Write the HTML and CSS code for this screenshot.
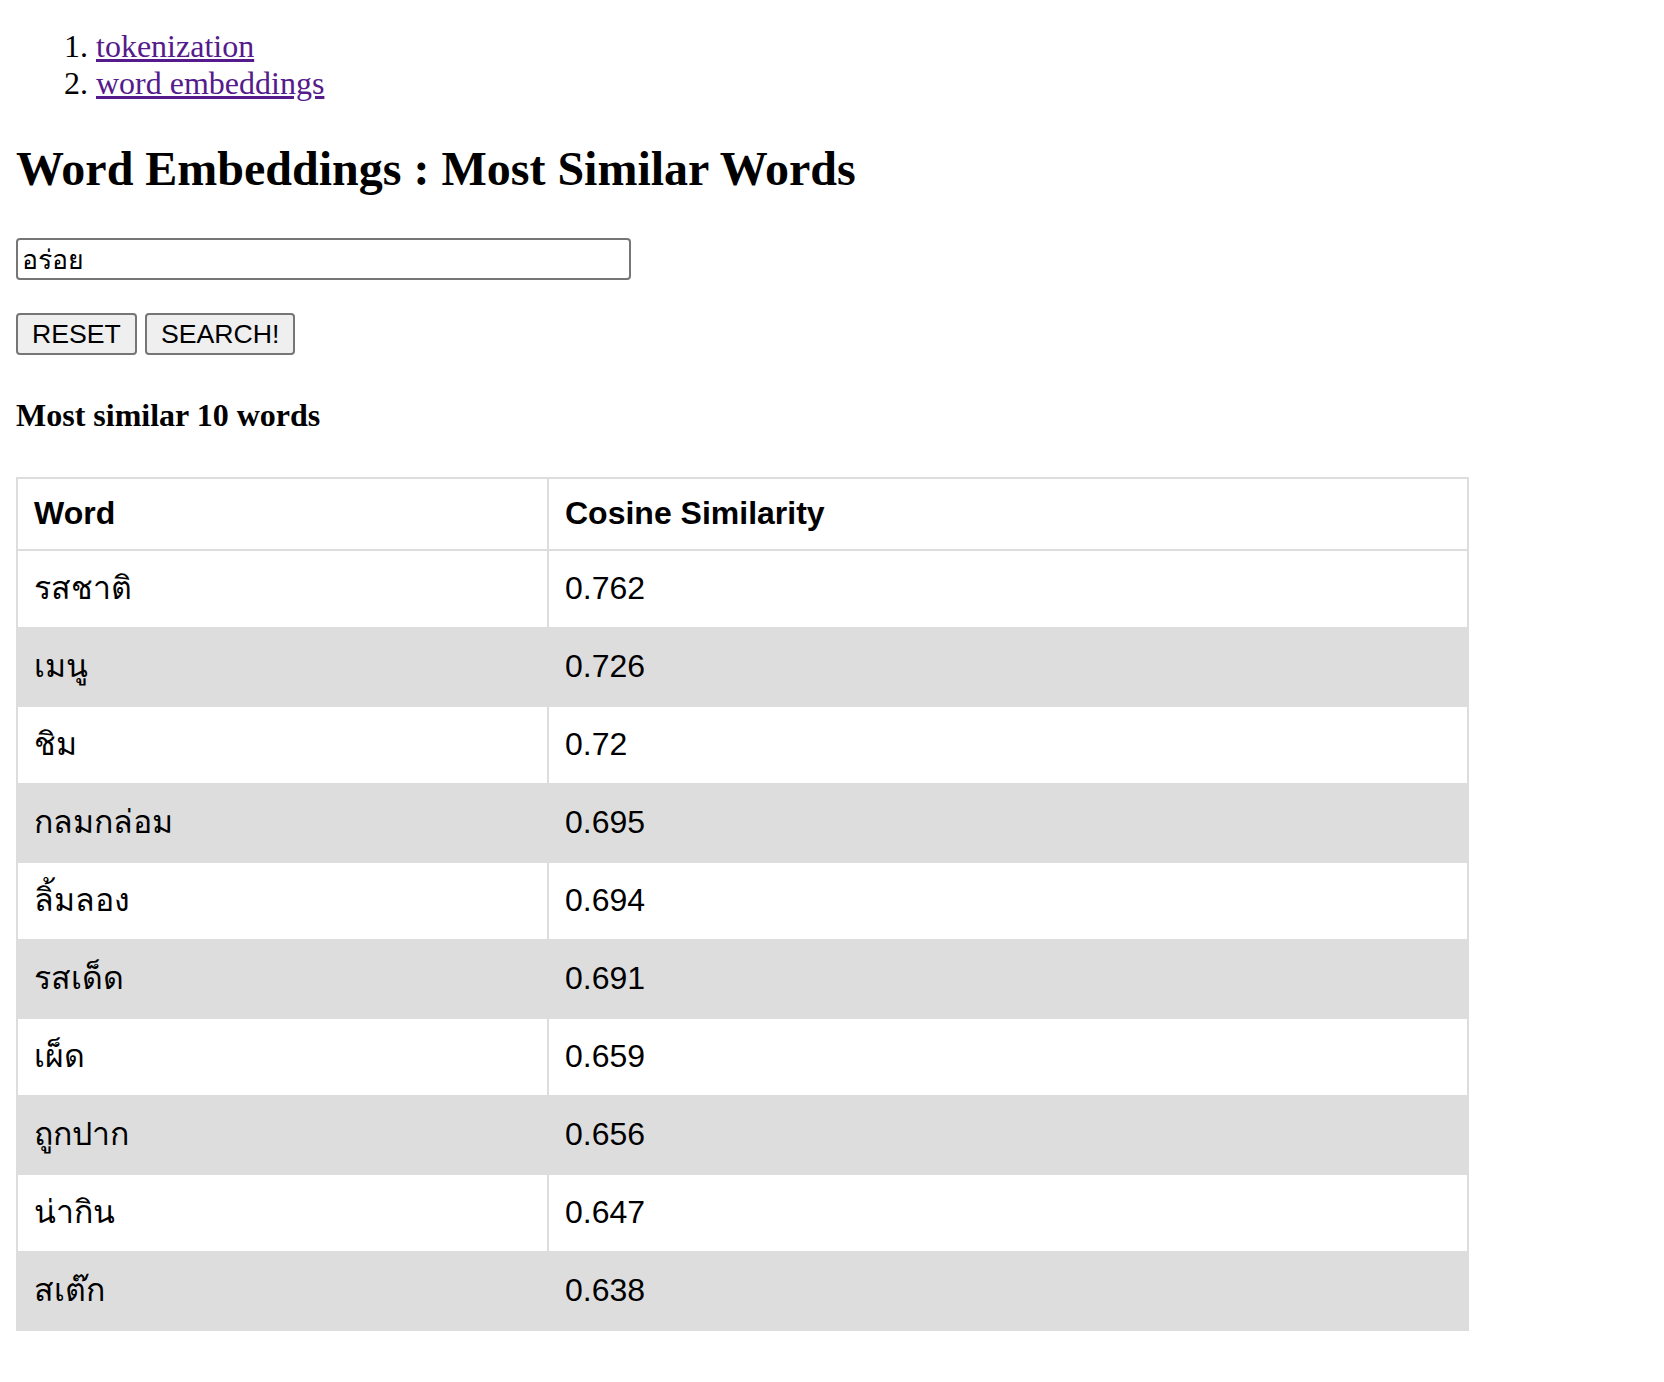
FILE: index.html
```html
<!DOCTYPE html>
<html lang="th">
<head>
<meta charset="utf-8">
<title>Word Embeddings : Most Similar Words</title>
<link rel="stylesheet" href="styles.css">
</head>
<body>
<ol class="nav">
  <li><a href="#tokenization">tokenization</a></li>
  <li><a href="#word-embeddings">word embeddings</a></li>
</ol>
<section class="main">
  <h1 class="title">Word Embeddings : Most Similar Words</h1>
  <div class="field"><input class="query" type="text" value="อร่อย"></div>
  <div class="actions">
    <button class="btn" type="button">RESET</button>
    <button class="btn" type="button">SEARCH!</button>
  </div>
  <h4 class="subtitle">Most similar 10 words</h4>
  <table class="results">
    <thead>
      <tr><th class="col-word">Word</th><th>Cosine Similarity</th></tr>
    </thead>
    <tbody>
      <tr><td>รสชาติ</td><td>0.762</td></tr>
      <tr><td>เมนู</td><td>0.726</td></tr>
      <tr><td>ชิม</td><td>0.72</td></tr>
      <tr><td>กลมกล่อม</td><td>0.695</td></tr>
      <tr><td>ลิ้มลอง</td><td>0.694</td></tr>
      <tr><td>รสเด็ด</td><td>0.691</td></tr>
      <tr><td>เผ็ด</td><td>0.659</td></tr>
      <tr><td>ถูกปาก</td><td>0.656</td></tr>
      <tr><td>น่ากิน</td><td>0.647</td></tr>
      <tr><td>สเต๊ก</td><td>0.638</td></tr>
    </tbody>
  </table>
</section>
</body>
</html>
```
FILE: styles.css
```css
html, body {
  background: #fff;
}
body {
  margin: 0;
  padding: 0 16px 40px;
  font-family: "Liberation Serif", "Times New Roman", serif;
  font-size: 32px;
  color: #000;
}
.nav {
  margin: 28px 0 0;
  padding-left: 80px;
  line-height: normal;
}
.nav a {
  color: #551a8b;
  text-decoration: underline;
}
.main {
  display: block;
}
.title {
  font-size: 48px;
  font-weight: bold;
  margin: 39px 0 42px;
  line-height: normal;
}
.field {
  display: block;
}
.query {
  box-sizing: border-box;
  width: 615px;
  height: 42px;
  margin: 0;
  padding: 0 4px;
  border: 2px solid #767676;
  border-radius: 4px;
  font-family: "Liberation Sans", Arial, sans-serif;
  font-size: 26.67px;
  color: #000;
  background: #fff;
}
.actions {
  display: flex;
  gap: 8px;
  margin-top: 33px;
}
.btn {
  box-sizing: border-box;
  height: 42px;
  margin: 0;
  padding: 0 14px;
  border: 2px solid #767676;
  border-radius: 4px;
  background: #efefef;
  font-family: "Liberation Sans", Arial, sans-serif;
  font-size: 26.67px;
  color: #000;
}
.subtitle {
  font-size: 32px;
  font-weight: bold;
  margin: 42px 0 43px;
  line-height: normal;
}
.results {
  border-collapse: collapse;
  width: 1453px;
  font-family: "Liberation Sans", Arial, sans-serif;
  font-size: 32px;
  border: 2px solid #ddd;
}
.results th,
.results td {
  border: 2px solid #ddd;
  text-align: left;
  vertical-align: baseline;
  padding-left: 16px;
  padding-right: 16px;
}
.results th {
  font-weight: bold;
  line-height: 40px;
  padding-top: 14px;
  padding-bottom: 16px;
}
.results .col-word {
  width: 497px;
}
.results td {
  line-height: 46px;
  padding-top: 14px;
  padding-bottom: 16px;
}
.results tbody tr:nth-child(even) {
  background: #ddd;
}
```
